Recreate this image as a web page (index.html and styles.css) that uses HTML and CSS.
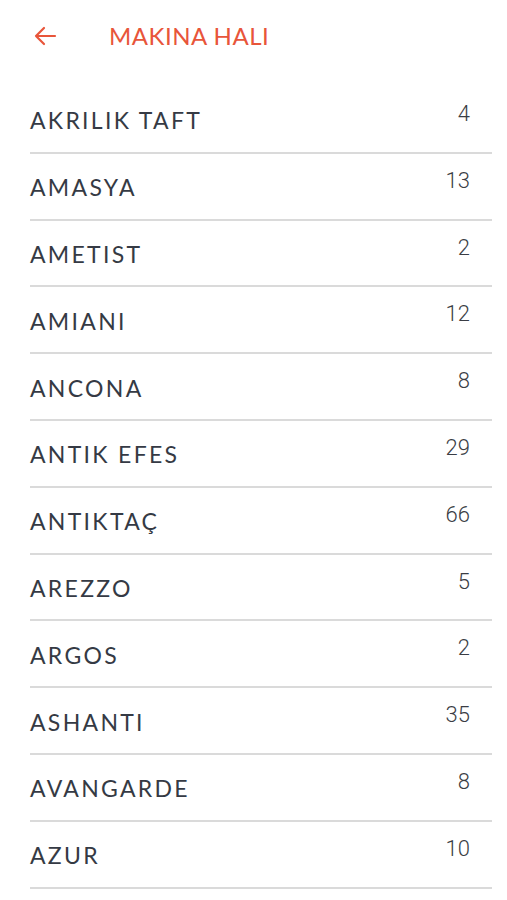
FILE: index.html
```html
<!DOCTYPE html>
<html lang="tr">
<head>
    <meta charset="UTF-8">
    <title>Makina Halı</title>
    <link rel="stylesheet" href="styles.css">
</head>
<body>
    <header class="topbar">
        <span class="back">
            <svg width="24" height="20" viewBox="0 0 24 20">
                <path d="M22 10H3M11 2L3 10l8 8" fill="none" stroke="#e8553a" stroke-width="2.2" stroke-linecap="round" stroke-linejoin="round"/>
            </svg>
        </span>
        <h1>MAKINA HALI</h1>
    </header>

    <ul class="list">
        <li class="row"><span class="name">AKRILIK TAFT</span><span class="count">4</span></li>
        <li class="row"><span class="name">AMASYA</span><span class="count">13</span></li>
        <li class="row"><span class="name">AMETIST</span><span class="count">2</span></li>
        <li class="row"><span class="name">AMIANI</span><span class="count">12</span></li>
        <li class="row"><span class="name">ANCONA</span><span class="count">8</span></li>
        <li class="row"><span class="name">ANTIK EFES</span><span class="count">29</span></li>
        <li class="row"><span class="name">ANTIKTAÇ</span><span class="count">66</span></li>
        <li class="row"><span class="name">AREZZO</span><span class="count">5</span></li>
        <li class="row"><span class="name">ARGOS</span><span class="count">2</span></li>
        <li class="row"><span class="name">ASHANTI</span><span class="count">35</span></li>
        <li class="row"><span class="name">AVANGARDE</span><span class="count">8</span></li>
        <li class="row"><span class="name">AZUR</span><span class="count">10</span></li>
    </ul>
</body>
</html>
```

FILE: styles.css
```css
/* Genel */
body {
    margin: 0;
    padding: 0;
    background: #fff;
    font-family: Lato, "Open Sans", sans-serif;
    color: #353a44;
}

/* Üst bar */
.topbar {
    height: 87px;
    display: flex;
    align-items: center;
    padding-left: 33px;
    box-sizing: border-box;
    padding-bottom: 16px;
}

.back {
    display: flex;
    width: 76px;
}

.topbar h1 {
    margin: 0;
    font-size: 24px;
    font-weight: 400;
    letter-spacing: 0.5px;
    color: #e8553a;
}

/* Liste */
.list {
    list-style: none;
    margin: 0 15px 0 30px;
    padding: 0;
}

.row {
    height: 66.8px;
    box-sizing: border-box;
    border-bottom: 2px solid #dadada;
    display: flex;
    justify-content: space-between;
    align-items: center;
    padding-right: 22px;
}

.name {
    font-size: 23px;
    font-weight: 400;
    letter-spacing: 2.3px;
    padding-top: 2px;
}

/* Quantidade à direita, um pouco acima do texto */
.count {
    align-self: flex-start;
    padding-top: 16px;
    font-family: Roboto, sans-serif;
    font-size: 22px;
    line-height: 22px;
    font-weight: 300;
    color: #3a3d44;
}
```
